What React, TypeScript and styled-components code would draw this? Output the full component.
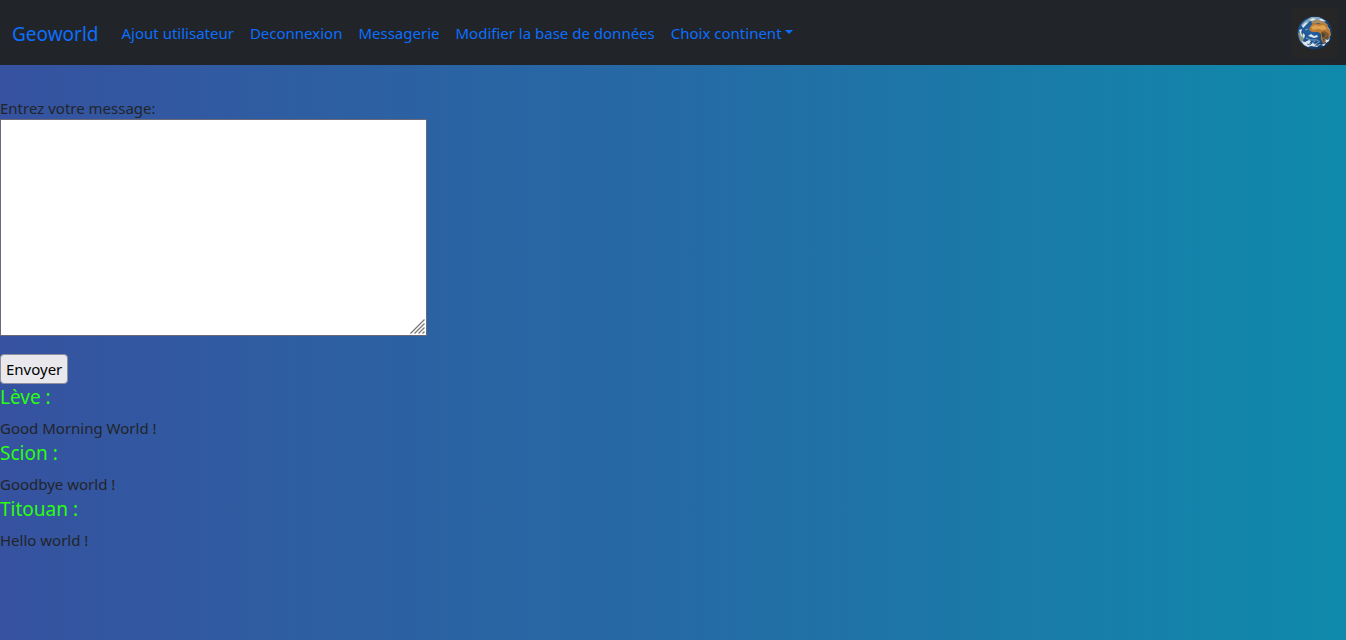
import React from "react";
import styled, { createGlobalStyle } from "styled-components";

const GlobalStyle = createGlobalStyle`
  *, *::before, *::after { box-sizing: border-box; }
  html { min-height: 100%; }
  body {
    margin: 0;
    min-height: 100vh;
    background: linear-gradient(90deg, #3652a0 0%, #2d5fa2 25%, #256aa5 50%, #0f8aab 100%);
    color: #212529;
    font-family: "Segoe UI", "Noto Sans", "Open Sans", sans-serif;
    font-size: 15px;
    line-height: 24px;
  }
`;

const Navbar = styled.nav`
  display: flex;
  align-items: center;
  height: 65px;
  padding: 0 9px 0 12px;
  background: #212529;
`;

const Brand = styled.a`
  margin-right: 15px;
  padding-top: 3px;
  color: #0d6efd;
  font-size: 19px;
  line-height: 30px;
  text-decoration: none;
`;

const NavList = styled.ul`
  display: flex;
  flex: 1;
  margin: 0;
  padding: 0;
  list-style: none;
`;

const NavLink = styled.a`
  display: flex;
  align-items: center;
  padding: 8px;
  color: #0d6efd;
  text-decoration: none;
  white-space: nowrap;
`;

const Caret = styled.span`
  margin: 0 0 2px 3px;
  border-top: 4px solid #0d6efd;
  border-left: 4px solid transparent;
  border-right: 4px solid transparent;
`;

const Logo = styled.a`
  display: flex;
  align-items: center;
  justify-content: center;
  width: 45px;
  height: 50px;
  background: #262626;
`;

const Content = styled.main`
  padding-top: 31px;
`;

const Label = styled.label`
  display: block;
`;

const MessageField = styled.div`
  position: relative;
  display: flex;
  width: fit-content;
  margin: -1px 0 18px;
`;

const MessageArea = styled.textarea`
  display: block;
  width: 427px;
  height: 217px;
  padding: 2px;
  border: 1px solid #69697a;
  border-radius: 0;
  background: #fff;
  color: #000;
  font: inherit;
  resize: both;

  &::-webkit-resizer { display: none; }
`;

const Grip = styled.svg`
  position: absolute;
  right: 2px;
  bottom: 2px;
  pointer-events: none;
`;

const SendButton = styled.button`
  display: block;
  height: 30px;
  padding: 0 5px;
  border: 1px solid #8f8f9d;
  border-radius: 4px;
  background: #e9e9ed;
  color: #000;
  font: inherit;
`;

const Author = styled.h5`
  margin: 0 0 6px;
  color: #29ff0d;
  font-size: 19px;
  font-weight: 400;
  line-height: 26px;
`;

const MessageText = styled.p`
  margin: 0;
`;

const links = ["Ajout utilisateur", "Deconnexion", "Messagerie", "Modifier la base de données"];

const messages = [
  { author: "Lève", text: "Good Morning World !" },
  { author: "Scion", text: "Goodbye world !" },
  { author: "Titouan", text: "Hello world !" },
];

function Globe() {
  return (
    <svg width="36" height="34" viewBox="0 0 36 34" aria-hidden="true">
      <defs>
        <radialGradient id="ocean" cx="40%" cy="42%" r="62%">
          <stop offset="0" stopColor="#2563a6" />
          <stop offset="0.65" stopColor="#1d4f8a" />
          <stop offset="1" stopColor="#142d4c" />
        </radialGradient>
        <clipPath id="disc"><ellipse cx="18" cy="17" rx="17.5" ry="16.5" /></clipPath>
      </defs>
      <g clipPath="url(#disc)">
        <rect width="36" height="34" fill="url(#ocean)" />
        <path d="M4 9 L8 5 L14 1 L22 1 L29 5 L26 7 L21 5 L17 6 L13 5 L10 8 L6 11Z" fill="#87a6ba" />
        <path d="M14 6 L19 4 L26 5 L31 9 L29 11 L22 7 L16 8Z" fill="#a88b5a" />
        <path d="M13 11 L16 7 L21 8 L25 7 L30 9 L33 14 L34 19 L31 22 L29 26 L26 27 L24 23 L24 18 L21 16 L15 16 L12 14Z" fill="#bc7933" />
        <path d="M14 11 L18 9 L22 10 L27 9 L30 13 L26 14 L21 13 L16 14Z" fill="#dda24f" />
        <path d="M24 16 L28 15 L32 18 L31 22 L28 25 L26 26 L25 21Z" fill="#7c5830" />
        <path d="M25 17 L28 18 L27 21 L25 21Z M29 22 L31 20 L29 25Z" fill="#43412e" />
        <path d="M1 17 L4 16 L7 20 L6 26 L3 25Z" fill="#839485" />
        <g fill="#dce6ec">
          <path d="M5 10 L8 7 L11 6 L9 9 L6 12Z M12 4 L16 2 L19 3 L15 5Z" />
          <path d="M2 14 L5 13 L4 17 L6 21 L4 20Z M6 17 L8 19 L7 23 L6 21Z" />
          <path d="M4 25 L8 26 L12 24 L14 25 L12 28 L16 27 L20 29 L24 28 L20 31 L14 30 L11 31 L7 29Z" />
          <path d="M11 20 L14 18 L17 20 L20 19 L21 21 L17 22 L14 21Z M24 29 L29 27 L27 30Z" />
          <path d="M28 23 L31 24 L33 20 L32 25 L29 27Z M22 3 L25 3 L28 5 L24 5Z" />
        </g>
        <path d="M9 22 L14 24 L20 24 L23 26 M8 14 L11 13 M17 29 L22 26 M14 28 L18 25 M30 11 L33 14" fill="none" stroke="#8db2ce" strokeWidth="0.8" />
        <path d="M10 28 L13 29 L15 27 M18 30 L22 29 M26 24 L29 24" fill="none" stroke="#315b7b" strokeWidth="0.8" />
      </g>
    </svg>
  );
}

export default function App() {
  return (
    <>
      <GlobalStyle />
      <Navbar>
        <Brand href="#">Geoworld</Brand>
        <NavList>
          {links.map((label) => (
            <li key={label}><NavLink href="#">{label}</NavLink></li>
          ))}
          <li><NavLink href="#" aria-haspopup="true">Choix continent<Caret /></NavLink></li>
        </NavList>
        <Logo href="#" aria-label="Geoworld"><Globe /></Logo>
      </Navbar>
      <Content>
        <form onSubmit={(event) => event.preventDefault()}>
          <Label htmlFor="message">Entrez votre message:</Label>
          <MessageField>
            <MessageArea id="message" name="message" />
            <Grip width="15" height="15" viewBox="0 0 15 15" aria-hidden="true">
              <path d="M0.5 14.5 L14.5 0.5 M4.5 14.5 L14.5 4.5 M8.5 14.5 L14.5 8.5 M12.5 14.5 L14.5 12.5" stroke="#777" strokeWidth="1.3" />
            </Grip>
          </MessageField>
          <SendButton type="submit">Envoyer</SendButton>
        </form>
        {messages.map(({ author, text }) => (
          <article key={author}>
            <Author>{author} :</Author>
            <MessageText>{text}</MessageText>
          </article>
        ))}
      </Content>
    </>
  );
}
